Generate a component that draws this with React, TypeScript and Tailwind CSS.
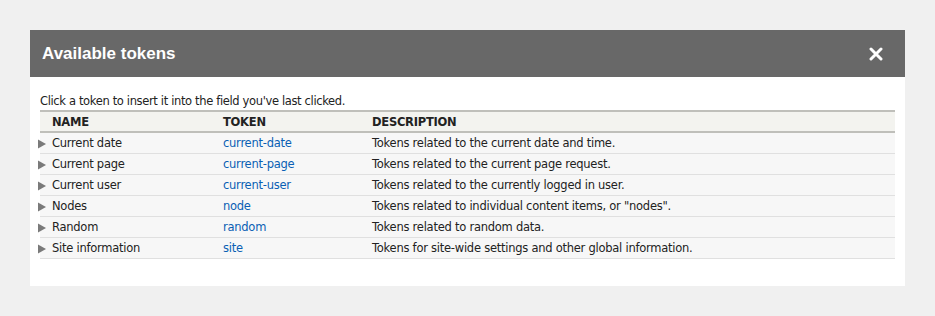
import React from "react";

const rows = [
  { name: "Current date", token: "current-date", desc: "Tokens related to the current date and time." },
  { name: "Current page", token: "current-page", desc: "Tokens related to the current page request." },
  { name: "Current user", token: "current-user", desc: "Tokens related to the currently logged in user." },
  { name: "Nodes", token: "node", desc: 'Tokens related to individual content items, or "nodes".' },
  { name: "Random", token: "random", desc: "Tokens related to random data." },
  { name: "Site information", token: "site", desc: "Tokens for site-wide settings and other global information." },
];

const App = () => {
  return (
    <div className="min-h-[316px] w-[935px] bg-[#f0f0f0] pt-[30px] px-[30px] font-['DejaVu_Sans',sans-serif] text-[#222]">
      <div className="bg-white h-[256px]">
        <div className="flex h-[47px] items-center justify-between bg-[#686868] pl-3 pr-[22px]">
          <span className="font-['Liberation_Sans',sans-serif] text-[17px] font-bold text-white">Available tokens</span>
          <svg width="14" height="14" viewBox="0 0 14 14">
            <path d="M2 2 L12 12 M12 2 L2 12" stroke="white" strokeWidth="3" strokeLinecap="round" />
          </svg>
        </div>
        <div className="px-[10px] pt-[16px]">
          <p className="text-[11.5px] leading-[17px] tracking-[-0.35px]">
            Click a token to insert it into the field you've last clicked.
          </p>
          <table className="w-full border-collapse text-[11.5px] tracking-[-0.25px]">
            <thead>
              <tr className="h-[20px] border-t-2 border-b-2 border-[#bfbfba] bg-[#f3f3ef] text-left">
                <th className="w-[183px] pl-3 pt-[2px] font-bold">NAME</th>
                <th className="w-[149px] pt-[2px] font-bold">TOKEN</th>
                <th className="pt-[2px] font-bold">DESCRIPTION</th>
              </tr>
            </thead>
            <tbody>
              {rows.map((r) => (
                <tr key={r.token} className="h-[21px] border-b border-[#e0e0e0] bg-[#f7f7f7]">
                  <td className="p-0 pt-[2px]">
                    <div className="flex items-center">
                      <svg width="15" height="10" viewBox="0 0 15 10" className="ml-[-3px]">
                        <path d="M1 0.5 L9 5 L1 9.5 Z" fill="#7a7a7a" />
                      </svg>
                      <span>{r.name}</span>
                    </div>
                  </td>
                  <td className="p-0 pt-[2px] text-[#0a5fb4]">{r.token}</td>
                  <td className="p-0 pt-[2px]">{r.desc}</td>
                </tr>
              ))}
            </tbody>
          </table>
        </div>
      </div>
    </div>
  );
};

export default App;
